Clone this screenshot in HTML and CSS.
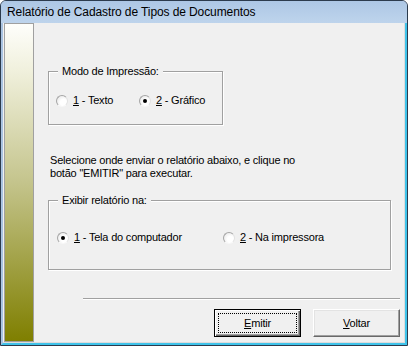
FILE: index.html
```html
<!DOCTYPE html>
<html lang="pt">
<head>
  <meta charset="UTF-8" />
  <title>Relatório de Cadastro de Tipos de Documentos</title>
  <link rel="stylesheet" href="styles.css">
</head>
<body>

  <div class="window">
    <div class="titlebar">Relatório de Cadastro de Tipos de Documentos</div>

    <div class="frame">
      <div class="client">
        <!-- Gradient strip on the left -->
        <div class="side-panel"></div>

        <div class="content">
          <fieldset class="group group-mode">
            <legend>Modo de Impressão:</legend>
            <div class="options">
              <label class="option option-mode"><span class="radio"></span><span><u>1</u> - Texto</span></label>
              <label class="option"><span class="radio checked"></span><span><u>2</u> - Gráfico</span></label>
            </div>
          </fieldset>

          <p class="hint">Selecione onde enviar o relatório abaixo, e clique no<br>botão "EMITIR" para executar.</p>

          <fieldset class="group group-output">
            <legend>Exibir relatório na:</legend>
            <div class="options">
              <label class="option option-output"><span class="radio checked"></span><span><u>1</u> - Tela do computador</span></label>
              <label class="option"><span class="radio"></span><span><u>2</u> - Na impressora</span></label>
            </div>
          </fieldset>

          <div class="separator"></div>

          <div class="buttons">
            <button type="button" class="btn btn-default"><span class="focus"><u>E</u>mitir</span></button>
            <button type="button" class="btn"><u>V</u>oltar</button>
          </div>
        </div>
      </div>
    </div>
  </div>

</body>
</html>
```

FILE: styles.css
```css
body {
  margin: 0;
  font-family: "Liberation Sans", Arial, sans-serif;
  font-size: 11px;
  color: #000;
  background-color: #fff;
}

/* Window chrome */
.window {
  width: 408px;
  height: 346px;
  box-sizing: border-box;
  border: 1px solid #2c3b4d;
  border-radius: 6px 6px 0 0;
  background-color: #bcd3ec;
  display: flex;
  flex-direction: column;
  overflow: hidden;
}

.titlebar {
  height: 22px;
  line-height: 22px;
  padding-left: 6px;
  font-size: 12px;
  letter-spacing: -0.1px;
  background: linear-gradient(#adc7e5, #bed4ec);
}

.frame {
  flex: 1;
  display: flex;
  border-left: 2px solid #a9c3e1;
  border-right: 2px solid #3fc3ea;
  border-bottom: 2px solid #3fc3ea;
}

.client {
  flex: 1;
  display: flex;
  align-items: flex-start;
  background-color: #f0f0f0;
  border-right: 1px solid #dcdcdc;
  border-bottom: 1px solid #dcdcdc;
}

.side-panel {
  width: 30px;
  height: 319px;
  margin-left: 1px;
  box-sizing: border-box;
  border: 1px solid #a0a0a0;
  background: linear-gradient(#fefefb, #f0f0dc 15%, #c4c48c 50%, #7f7f00);
}

.content {
  flex: 1;
  display: flex;
  flex-direction: column;
  letter-spacing: -0.2px;
}

/* Group boxes */
.group {
  margin: 0 0 0 14px;
  padding: 0;
  min-width: 0;
  box-sizing: border-box;
  border: 1px solid #a0a0a0;
  box-shadow: 1px 1px 0 #fff, inset 1px 1px 0 #fff;
}

.group legend {
  height: 13px;
  line-height: 13px;
  padding: 0 4px;
  background-color: #f0f0f0;
}

.group-mode {
  width: 175px;
  margin-top: 42px;
  padding: 16px 0 17px 7px;
}

.group-mode legend {
  margin-left: 2px;
}

.group-output {
  width: 343px;
  margin-top: 14px;
  padding: 24px 0 25px 8px;
}

.group-output legend {
  margin-left: 1px;
}

.options {
  display: flex;
  height: 13px;
}

.option {
  display: flex;
  align-items: center;
  gap: 5px;
  line-height: 13px;
}

.option-mode {
  width: 83px;
}

.option-output {
  width: 166px;
}

.radio {
  position: relative;
  width: 12px;
  height: 12px;
  box-sizing: border-box;
  border-radius: 50%;
  border: 1px solid;
  border-color: #a5a5a5 #e2e2e2 #f8f8f8 #a5a5a5;
  background: radial-gradient(circle at 65% 65%, #ffffff 35%, #e2e2e2);
}

.radio.checked::after {
  content: "";
  position: absolute;
  left: 3px;
  top: 3px;
  width: 4px;
  height: 4px;
  border-radius: 50%;
  background-color: #000;
}

.hint {
  margin: 29px 0 0 16px;
  line-height: 13px;
}

.separator {
  margin: 28px 4px 0 49px;
  border-top: 1px solid #a0a0a0;
  border-bottom: 1px solid #fff;
}

/* Buttons */
.buttons {
  display: flex;
  justify-content: flex-end;
  gap: 12px;
  margin-top: 9px;
  padding-right: 4px;
}

.btn {
  width: 87px;
  height: 28px;
  padding: 0;
  box-sizing: border-box;
  font: inherit;
  letter-spacing: inherit;
  color: #000;
  background-color: #f0f0f0;
  border: 1px solid;
  border-color: #fff #696969 #696969 #fff;
  box-shadow: inset -1px -1px 0 #a0a0a0, inset 1px 1px 0 #e3e3e3;
}

.btn-default {
  padding: 3px;
  border: 1px solid #000;
  box-shadow: inset 1px 1px 0 #fff, inset -1px -1px 0 #696969, inset -2px -2px 0 #a0a0a0;
}

.focus {
  display: flex;
  height: 100%;
  align-items: center;
  justify-content: center;
  box-sizing: border-box;
  border: 1px dotted #000;
}
```
